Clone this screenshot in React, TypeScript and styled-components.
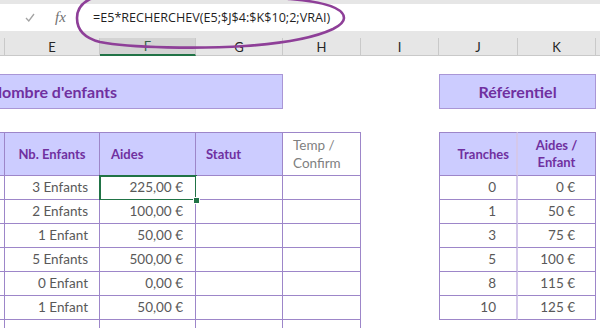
import React from 'react';
import styled, { createGlobalStyle } from 'styled-components';

const GlobalStyle = createGlobalStyle`
  html, body { margin: 0; padding: 0; background: #ffffff; }
  body {
    width: 600px;
    height: 328px;
    overflow: hidden;
    font-family: Lato, "Open Sans", sans-serif;
  }
`;

const PURPLE_LINE = '#9d86c9';
const LIGHT_LINE = '#d4c8ea';
const LAVENDER = '#ccccff';
const TITLE_TEXT = '#7030a0';
const DATA_TEXT = '#595959';
const EXCEL_GREEN = '#217346';

const COLUMNS = [
  { key: 'D', w: 181 },
  { key: 'E', w: 95 },
  { key: 'F', w: 96 },
  { key: 'G', w: 87 },
  { key: 'H', w: 78 },
  { key: 'I', w: 78 },
  { key: 'J', w: 79 },
  { key: 'K', w: 78 },
  { key: 'L', w: 200 },
];
const TEMPLATE = COLUMNS.map((c) => `${c.w}px`).join(' ');

const Page = styled.div`
  position: relative;
  width: 600px;
  height: 328px;
  overflow: hidden;
  background: #ffffff;
`;

const FormulaBar = styled.div`
  box-sizing: border-box;
  height: 38px;
  padding: 4px 0 7px;
  background: #e6e6e6;
`;

const FormulaStrip = styled.div`
  display: flex;
  align-items: center;
  height: 27px;
  background: #ffffff;
`;

const IconZone = styled.div`
  display: flex;
  align-items: center;
  width: 78px;
  flex: none;
`;

const CheckIcon = styled.svg`
  margin-left: 25px;
  width: 10px;
  height: 9px;
`;

const FxLabel = styled.span`
  margin-left: 20px;
  font-family: "Liberation Serif", "DejaVu Serif", serif;
  font-style: italic;
  font-size: 15px;
  color: #707070;
`;

const FormulaText = styled.span`
  margin-left: 15px;
  font-family: "Open Sans", "Noto Sans", sans-serif;
  font-size: 12.6px;
  color: #1f1f1f;
  white-space: nowrap;
`;

const ColumnHeaderRow = styled.div`
  display: grid;
  grid-template-columns: ${TEMPLATE};
  margin-left: -176px;
  height: 18px;
  background: #e6e6e6;
`;

const ColumnLetter = styled.div<{ $active?: boolean }>`
  box-sizing: border-box;
  display: flex;
  align-items: center;
  justify-content: center;
  height: 18px;
  border-right: 1px solid #c9c9c9;
  border-bottom: ${(p) => (p.$active ? `2px solid ${EXCEL_GREEN}` : '1px solid #c9c9c9')};
  background: ${(p) => (p.$active ? '#d3d3d3' : '#e6e6e6')};
  color: ${(p) => (p.$active ? '#36624a' : '#262626')};
  font-size: 13px;
  line-height: 16px;
`;

const Sheet = styled.div`
  display: grid;
  grid-template-columns: ${TEMPLATE};
  grid-template-rows: 18px 35px 23px 44px repeat(7, 24px);
  margin-left: -176px;
`;

const TitleBox = styled.div<{ $col: string }>`
  grid-row: 2;
  grid-column: ${(p) => p.$col};
  box-sizing: border-box;
  display: flex;
  align-items: center;
  justify-content: center;
  background: ${LAVENDER};
  border: 1px solid #a996d6;
  color: ${TITLE_TEXT};
  font-weight: 700;
  font-size: 16px;
`;

type Align = 'left' | 'center' | 'right';

const Cell = styled.div<{
  $row: number;
  $col: number;
  $head?: boolean;
  $fill?: boolean;
  $align?: Align;
  $pad?: number;
  $top?: boolean;
  $leftEdge?: boolean;
  $divider?: boolean;
  $note?: boolean;
  $selected?: boolean;
}>`
  position: relative;
  grid-row: ${(p) => p.$row};
  grid-column: ${(p) => p.$col};
  box-sizing: border-box;
  display: flex;
  align-items: center;
  justify-content: ${(p) =>
    p.$align === 'center' ? 'center' : p.$align === 'left' ? 'flex-start' : 'flex-end'};
  text-align: ${(p) => p.$align ?? 'right'};
  padding: ${(p) =>
    p.$align === 'left' ? `0 0 0 ${p.$pad ?? 0}px` : `0 ${p.$pad ?? 0}px 0 0`};
  background: ${(p) => (p.$fill ? LAVENDER : '#ffffff')};
  border-bottom: 1px solid ${PURPLE_LINE};
  border-right: ${(p) => (p.$divider ? `2px solid ${LIGHT_LINE}` : `1px solid ${PURPLE_LINE}`)};
  border-top: ${(p) => (p.$top ? `1px solid ${PURPLE_LINE}` : 'none')};
  border-left: ${(p) => (p.$leftEdge ? `1px solid ${PURPLE_LINE}` : 'none')};
  color: ${(p) => (p.$head ? TITLE_TEXT : p.$note ? '#7f7f7f' : DATA_TEXT)};
  font-weight: ${(p) => (p.$head ? 700 : 400)};
  font-size: ${(p) => (p.$head ? '13px' : '13.5px')};
  line-height: ${(p) => (p.$note ? '18px' : '17px')};

  ${(p) =>
    p.$selected
      ? `
    &::after {
      content: '';
      position: absolute;
      left: -1px;
      top: -1px;
      right: -2px;
      bottom: -2px;
      border: 2px solid ${EXCEL_GREEN};
    }
    &::before {
      content: '';
      position: absolute;
      right: -5px;
      bottom: -5px;
      width: 5px;
      height: 5px;
      background: ${EXCEL_GREEN};
      border: 1px solid #ffffff;
      z-index: 2;
    }
  `
      : ''}
`;

const Ellipse = styled.svg`
  position: absolute;
  left: 0;
  top: 0;
  width: 600px;
  height: 70px;
  pointer-events: none;
`;

const leftRows = [
  ['3 Enfants', '225,00 €'],
  ['2 Enfants', '100,00 €'],
  ['1 Enfant', '50,00 €'],
  ['5 Enfants', '500,00 €'],
  ['0 Enfant', '0,00 €'],
  ['1 Enfant', '50,00 €'],
  ['', ''],
];

const rightRows = [
  ['0', '0 €'],
  ['1', '50 €'],
  ['3', '75 €'],
  ['5', '100 €'],
  ['8', '115 €'],
  ['10', '125 €'],
];

export default function App() {
  return (
    <Page>
      <GlobalStyle />
      <FormulaBar>
        <FormulaStrip>
          <IconZone>
            <CheckIcon viewBox="0 0 10 9">
              <polyline points="1,5 3.8,8 9,1" fill="none" stroke="#a3a3a3" strokeWidth="1.3" />
            </CheckIcon>
            <FxLabel>fx</FxLabel>
          </IconZone>
          <FormulaText>=E5*RECHERCHEV(E5;$J$4:$K$10;2;VRAI)</FormulaText>
        </FormulaStrip>
      </FormulaBar>

      <ColumnHeaderRow>
        {COLUMNS.map((c) => (
          <ColumnLetter key={c.key} $active={c.key === 'F'}>
            {c.key}
          </ColumnLetter>
        ))}
      </ColumnHeaderRow>

      <Sheet>
        <TitleBox $col="1 / 5">Nombre d'enfants</TitleBox>
        <TitleBox $col="7 / 9">Référentiel</TitleBox>

        {/* left table header */}
        <Cell $row={4} $col={1} $top $fill />
        <Cell $row={4} $col={2} $top $fill $head $align="center">Nb. Enfants</Cell>
        <Cell $row={4} $col={3} $top $fill $head $align="left" $pad={11}>Aides</Cell>
        <Cell $row={4} $col={4} $top $fill $head $align="left" $pad={10}>Statut</Cell>
        <Cell $row={4} $col={5} $top $note $align="left" $pad={10}>
          Temp /<br />Confirm
        </Cell>

        {leftRows.map((r, i) => (
          <React.Fragment key={`l${i}`}>
            <Cell $row={5 + i} $col={1} />
            <Cell $row={5 + i} $col={2} $pad={11}>{r[0]}</Cell>
            <Cell $row={5 + i} $col={3} $pad={12} $selected={i === 0}>{r[1]}</Cell>
            <Cell $row={5 + i} $col={4} />
            <Cell $row={5 + i} $col={5} />
          </React.Fragment>
        ))}

        {/* right table */}
        <Cell $row={4} $col={7} $top $leftEdge $divider $fill $head $pad={7}>Tranches</Cell>
        <Cell $row={4} $col={8} $top $fill $head $align="center">
          Aides /<br />Enfant
        </Cell>
        {rightRows.map((r, i) => (
          <React.Fragment key={`r${i}`}>
            <Cell $row={5 + i} $col={7} $leftEdge $divider $pad={20}>{r[0]}</Cell>
            <Cell $row={5 + i} $col={8} $pad={20}>{r[1]}</Cell>
          </React.Fragment>
        ))}
      </Sheet>

      <Ellipse viewBox="0 0 600 70">
        <path
          d="M 77 18 C 77 30, 84 38, 100 42 C 130 48, 200 49, 245 46 C 290 43, 318 36, 333 29 C 341 25, 344 22, 344 18 C 344 8, 325 2, 290 -1 C 230 -8, 120 -8, 90 -1 C 80 4, 77 10, 77 18 Z"
          fill="none"
          stroke="#8e3f98"
          strokeWidth="2.6"
        />
      </Ellipse>
    </Page>
  );
}
